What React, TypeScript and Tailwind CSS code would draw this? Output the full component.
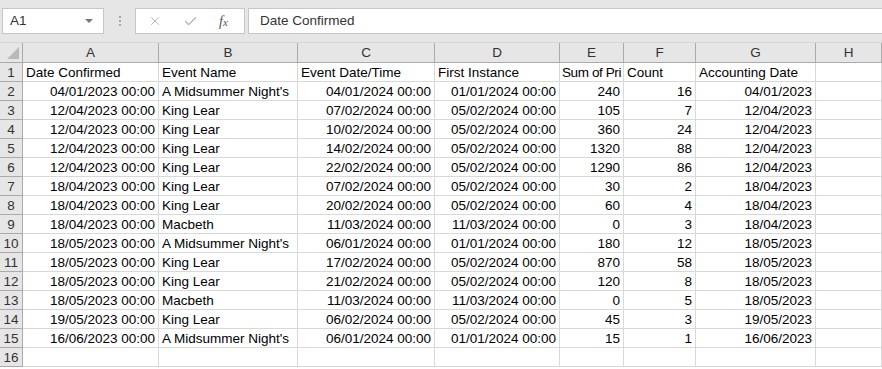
import { X, Check } from "lucide-react";

type Row = [string, string, string, string, string, string, string];

const rows: Row[] = [
  ["04/01/2023 00:00", "A Midsummer Night's", "04/01/2024 00:00", "01/01/2024 00:00", "240", "16", "04/01/2023"],
  ["12/04/2023 00:00", "King Lear", "07/02/2024 00:00", "05/02/2024 00:00", "105", "7", "12/04/2023"],
  ["12/04/2023 00:00", "King Lear", "10/02/2024 00:00", "05/02/2024 00:00", "360", "24", "12/04/2023"],
  ["12/04/2023 00:00", "King Lear", "14/02/2024 00:00", "05/02/2024 00:00", "1320", "88", "12/04/2023"],
  ["12/04/2023 00:00", "King Lear", "22/02/2024 00:00", "05/02/2024 00:00", "1290", "86", "12/04/2023"],
  ["18/04/2023 00:00", "King Lear", "07/02/2024 00:00", "05/02/2024 00:00", "30", "2", "18/04/2023"],
  ["18/04/2023 00:00", "King Lear", "20/02/2024 00:00", "05/02/2024 00:00", "60", "4", "18/04/2023"],
  ["18/04/2023 00:00", "Macbeth", "11/03/2024 00:00", "11/03/2024 00:00", "0", "3", "18/04/2023"],
  ["18/05/2023 00:00", "A Midsummer Night's", "06/01/2024 00:00", "01/01/2024 00:00", "180", "12", "18/05/2023"],
  ["18/05/2023 00:00", "King Lear", "17/02/2024 00:00", "05/02/2024 00:00", "870", "58", "18/05/2023"],
  ["18/05/2023 00:00", "King Lear", "21/02/2024 00:00", "05/02/2024 00:00", "120", "8", "18/05/2023"],
  ["18/05/2023 00:00", "Macbeth", "11/03/2024 00:00", "11/03/2024 00:00", "0", "5", "18/05/2023"],
  ["19/05/2023 00:00", "King Lear", "06/02/2024 00:00", "05/02/2024 00:00", "45", "3", "19/05/2023"],
  ["16/06/2023 00:00", "A Midsummer Night's", "06/01/2024 00:00", "01/01/2024 00:00", "15", "1", "16/06/2023"],
];

const headers = ["Date Confirmed", "Event Name", "Event Date/Time", "First Instance", "Sum of Pri", "Count", "Accounting Date"];
const letters = ["A", "B", "C", "D", "E", "F", "G", "H", ""];
// column B holds text, the rest are numbers/dates and sit on the right
const textCols = [1];

const gridCols = "grid grid-cols-[23px_136px_139px_137px_125px_64px_72px_120px_66px_1fr]";

function Toolbar() {
  return (
    <div className="flex h-[43px] items-start border-b border-[#d6d6d6] bg-[#e6e6e6] pt-2">
      <div className="ml-[2px] flex h-[26px] w-[102px] items-center justify-between border border-[#c6c6c6] bg-white pl-[7px] pr-[10px] text-[13.5px] text-[#333]">
        <span>A1</span>
        <span className="h-0 w-0 border-x-[4px] border-t-[4px] border-x-transparent border-t-[#777]" />
      </div>
      <div className="flex h-[26px] w-[31px] flex-col items-center justify-center gap-[2px]">
        <span className="h-[2px] w-[2px] bg-[#a6a6a6]" />
        <span className="h-[2px] w-[2px] bg-[#a6a6a6]" />
        <span className="h-[2px] w-[2px] bg-[#a6a6a6]" />
      </div>
      <div className="flex h-[26px] w-[110px] items-center border border-[#c6c6c6] bg-white">
        <X className="ml-[12px] h-[14px] w-[14px] text-[#b4b4b4]" strokeWidth={1.6} />
        <Check className="ml-[21px] h-[15px] w-[15px] text-[#b4b4b4]" strokeWidth={2.2} />
        <span className="ml-[21px] font-['Liberation_Serif',serif] text-[14px] italic text-[#555]">
          f<span className="text-[11px]">x</span>
        </span>
      </div>
      <div className="ml-[3px] flex h-[26px] flex-1 items-center border border-r-0 border-[#c6c6c6] bg-white pl-[11px] text-[13.5px] text-[#333]">
        Date Confirmed
      </div>
    </div>
  );
}

function Cell({ value, right, tight }: { value: string; right?: boolean; tight?: boolean }) {
  return (
    <div
      className={`h-[19px] overflow-hidden whitespace-nowrap border-b border-r border-[#d9d9d9] bg-white leading-[20px] text-black ${
        right ? "text-right" : "text-left"
      } ${tight ? "pl-[2px] pr-0 tracking-[-0.4px]" : "px-[3px]"}`}
    >
      {value}
    </div>
  );
}

export default function App() {
  return (
    <div className="h-[369px] w-[882px] overflow-hidden bg-white font-['Liberation_Sans',Arial,sans-serif] text-[13.5px]">
      <Toolbar />

      <div className={gridCols}>
        <div className="relative h-[20px] border-b border-r border-[#ababab] bg-[#e6e6e6]">
          <span className="absolute bottom-[3px] right-[3px] h-0 w-0 border-b-[12px] border-l-[12px] border-b-[#b9b9b9] border-l-transparent" />
        </div>
        {letters.map((l, i) => (
          <div
            key={i}
            className="h-[20px] border-b border-r border-[#ababab] bg-[#e6e6e6] text-center leading-[20px] text-[#333]"
          >
            {l}
          </div>
        ))}

        {[headers, ...rows, null].map((r, ri) => (
          <div key={ri} className="contents">
            <div className="h-[19px] border-b border-r border-[#ababab] bg-[#e6e6e6] text-center leading-[20px] text-[#333]">
              {ri + 1}
            </div>
            {Array.from({ length: 7 }).map((_, ci) => (
              <Cell
                key={ci}
                value={r ? r[ci] : ""}
                right={ri > 0 && !textCols.includes(ci)}
                tight={ri === 0 && ci === 4}
              />
            ))}
            <Cell value="" />
            <Cell value="" />
          </div>
        ))}
      </div>
    </div>
  );
}
